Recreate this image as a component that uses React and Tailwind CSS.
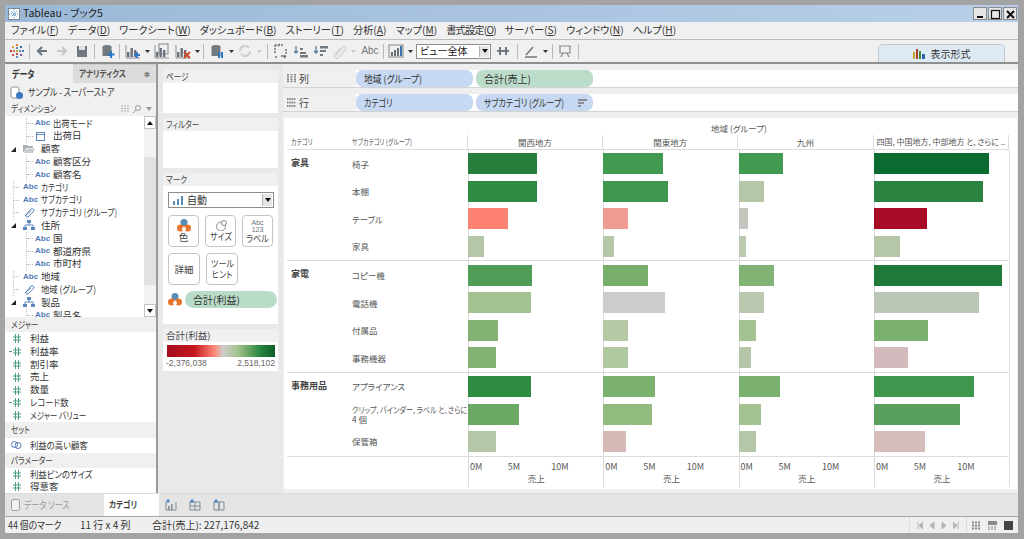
import React from 'react';

const T = ({ children, className = '' }) => {
  const s = String(children);
  const kana = (s.match(/[\u3040-\u30ff]/g) || []).length;
  const han = (s.match(/[\u4e00-\u9fff]/g) || []).length;
  const cls = kana === 0 ? '' : han === 0 ? 'scale-x-[0.8]' : 'scale-x-[0.88]';
  return <span className={`inline-block origin-left whitespace-nowrap ${cls} ${className}`}>{children}</span>;
};

const Svg = ({ w = 16, h = 16, children, className = '' }) => (
  <svg width={w} height={h} viewBox={`0 0 ${w} ${h}`} className={`block shrink-0 ${className}`}>{children}</svg>
);
const Bars = ({ c = '#66717c' }) => (<>
  <rect x="2" y="9" width="2.4" height="5" fill={c} /><rect x="5.5" y="5" width="2.4" height="9" fill={c} /><rect x="9" y="7" width="2.4" height="7" fill={c} />
  <path d="M1 2V15H15" stroke="#8a9097" fill="none" />
</>);
const Logo = () => (
  <Svg>
    {[[8, 2, '#e8803a'], [8, 14, '#5f8fc0'], [2, 8, '#c0392b'], [14, 8, '#4a7fb5'], [4, 4, '#e0a030'], [12, 4, '#3f6fa0'], [4, 12, '#d05050'], [12, 12, '#7a5aa0'], [8, 8, '#d0a040'], [8, 5, '#5a88b8'], [5, 8, '#e07050'], [11, 8, '#5a88b8'], [8, 11, '#c05040']].map(([x, y, c], i) => (
      <rect key={i} x={x - 1} y={y - 1} width="2" height="2" fill={c} />
    ))}
  </Svg>
);
const Caret = ({ c = '#333' }) => (
  <span className="w-[8px] flex justify-center shrink-0"><svg width="5" height="3"><path d="M0 0H5L2.5 3Z" fill={c} /></svg></span>
);
const Sep = ({ cls = 'mx-[5px]' }) => <span className={`w-px h-[15px] bg-[#b8b8b8] shrink-0 ${cls}`} />;
const Slot = ({ w = 'w-[20px]', children }) => <span className={`${w} h-[20px] flex items-center justify-center shrink-0`}>{children}</span>;

const Toolbar = () => (
  <div className="h-[24px] flex items-center pl-[3px] bg-[#f0f0f0] border-b-2 border-[#8f8f8f] relative">
    <Slot w="w-[18px]"><Logo /></Slot>
    <Sep cls="ml-[3px] mr-[2px]" />
    <Slot><Svg><path d="M13 8H4M8 4L4 8L8 12" stroke="#6b7680" strokeWidth="2.2" fill="none" /></Svg></Slot>
    <Slot><Svg><path d="M3 8H12M8 4L12 8L8 12" stroke="#c8c8c8" strokeWidth="2.2" fill="none" /></Svg></Slot>
    <Slot><Svg><path d="M3 3H13V14H3Z" fill="#70777e" /><rect x="5" y="3" width="6" height="4" fill="#dfe1e3" /></Svg></Slot>
    <Sep cls="mx-[2px]" />
    <Slot w="w-[22px]"><Svg><ellipse cx="7" cy="4" rx="4.5" ry="2" fill="#737a80" /><rect x="2.500" y="4" width="9" height="9" fill="#737a80" /><path d="M11 8V15M7.500 11.500H14.500" stroke="#2a78c0" strokeWidth="2" /></Svg></Slot>
    <Sep cls="mr-[3px]" />
    <Slot><Svg><Bars /><path d="M12 9V15M9 12H15" stroke="#2a78c0" strokeWidth="1.800" /></Svg></Slot>
    <Caret />
    <Slot w="w-[22px]"><Svg><Bars /><rect x="5" y="1" width="9" height="10" fill="none" stroke="#80868c" /></Svg></Slot>
    <Slot w="w-[20px]"><Svg><Bars /><path d="M9 9L15 15M15 9L9 15" stroke="#d04a28" strokeWidth="1.800" /></Svg></Slot>
    <Caret />
    <Sep cls="ml-[2px] mr-[3px]" />
    <Slot><Svg><ellipse cx="7" cy="4" rx="4.500" ry="2" fill="#737a80" /><rect x="2.500" y="4" width="9" height="9" fill="#737a80" /><rect x="9" y="9" width="2" height="6" fill="#2a78c0" /><rect x="12" y="9" width="2" height="6" fill="#2a78c0" /></Svg></Slot>
    <Caret />
    <Slot w="w-[20px]"><Svg><path d="M3 8A5 5 0 0 1 12 5M13 8A5 5 0 0 1 4 11" stroke="#cfcfcf" strokeWidth="2" fill="none" /></Svg></Slot>
    <Caret c="#c8c8c8" />
    <Sep cls="ml-[4px] mr-[3px]" />
    <Slot><Svg><path d="M2 2H10M2 2V11M2 14H5M13 6V11" stroke="#6b7680" strokeWidth="1.500" strokeDasharray="2 1" fill="none" /><path d="M8 13H13M13 13L11 15M5 3L7 1" stroke="#6b7680" strokeWidth="1.500" fill="none" /></Svg></Slot>
    <Slot><Svg><path d="M3 3V10M1 8L3 10L5 8" stroke="#5b7f9d" strokeWidth="1.300" fill="none" /><rect x="7" y="5" width="3" height="2" fill="#737a80" /><rect x="7" y="9" width="6" height="2" fill="#737a80" /><rect x="7" y="12" width="8" height="2.500" fill="#737a80" /></Svg></Slot>
    <Slot><Svg><path d="M3 3V10M1 8L3 10L5 8" stroke="#5b7f9d" strokeWidth="1.300" fill="none" /><rect x="7" y="3" width="8" height="2.500" fill="#737a80" /><rect x="7" y="7" width="6" height="2" fill="#737a80" /><rect x="7" y="11" width="3" height="2" fill="#737a80" /></Svg></Slot>
    <Slot w="w-[18px]"><Svg><path d="M4 12L11 4A2 2 0 0 1 14 6L7 14A2 2 0 0 1 3 11L9 5" stroke="#d4d4d4" strokeWidth="1.300" fill="none" /></Svg></Slot>
    <Caret c="#c8c8c8" />
    <span className="w-[26px] text-[10px] leading-none text-[#777] text-center shrink-0 font-['Liberation_Sans',sans-serif]">Abc</span>
    <Sep cls="mr-[2px]" />
    <Slot w="w-[20px]"><Svg><rect x="1" y="2" width="14" height="12" fill="none" stroke="#80868c" /><rect x="3" y="9" width="2" height="4" fill="#66717c" /><rect x="6" y="7" width="2" height="6" fill="#66717c" /><rect x="9" y="5" width="2" height="8" fill="#66717c" /><rect x="12" y="3" width="2" height="10" fill="#3b73b0" /></Svg></Slot>
    <Caret />
    <div className="w-[75px] h-[15px] ml-[2px] bg-white border border-[#8c8c8c] flex items-center pl-[3px] text-[10px] leading-none text-[#222] relative shrink-0">
      ビュー全体
      <span className="absolute right-px top-px bottom-px w-[10px] bg-[#e4e4e4] border-l border-[#b0b0b0] flex items-center justify-center"><svg width="6" height="4"><path d="M0 0H6L3 4Z" fill="#111" /></svg></span>
    </div>
    <Slot w="w-[23px]"><Svg><path d="M2 8H14M5 4V12M11 4V12" stroke="#70777e" strokeWidth="2" /></Svg></Slot>
    <Sep cls="mx-[3px]" />
    <Slot><Svg><path d="M3 12L10 4M2 14H14" stroke="#777" strokeWidth="1.600" /></Svg></Slot>
    <Caret />
    <Sep cls="ml-[3px] mr-[2px]" />
    <Slot><Svg><path d="M2 3H14M3 3V10H13V3M6 10L4 14M10 10L12 14" stroke="#8a8a8a" strokeWidth="1.200" fill="none" /></Svg></Slot>
    <Sep cls="ml-[3px]" />
    <div className="ml-auto mr-[13px] self-end w-[127px] h-[18px] rounded-t-[5px] border border-b-0 border-[#c2c8ce] bg-[#dde9f3] flex items-center justify-center gap-[5px] text-[10px] leading-none text-[#333]">
      <svg width="13" height="11" className="shrink-0"><rect x="0" y="4" width="2" height="7" fill="#c9a12b" /><rect x="3" y="1" width="2" height="10" fill="#b03a2e" /><rect x="6" y="3" width="2" height="8" fill="#3e8a3e" /><rect x="9" y="6" width="3" height="5" fill="#2f5fa8" /></svg>
      表示形式
    </div>
  </div>
);

const menu = [
  ['ファイル', 'F', ''], ['データ', 'D', ''], ['ワークシート', 'W', ''], ['ダッシュボード', 'B', ''], ['ストーリー', 'T', ''], ['分析', 'A', ''], ['マップ', 'M', ''], ['書式設定', 'O', 'tracking-[-0.8px]'], ['サーバー', 'S', ''], ['ウィンドウ', 'N', ''], ['ヘルプ', 'H', ''],
];

const Abc = () => <span className="w-[13px] shrink-0 text-[8px] leading-none font-bold text-[#4f78b5] font-['Liberation_Sans',sans-serif]">Abc</span>;
const Clip = () => <Svg w={13} h={11} className="shrink-0"><path d="M2 9L8 2A2 2 0 0 1 11 4L5 10A1.500 1.500 0 0 1 3 8L8 4" stroke="#5c86bd" fill="none" /></Svg>;
const Hier = () => <Svg w={13} h={11} className="shrink-0"><rect x="4" y="0" width="4" height="3" fill="#5c86bd" /><rect x="0" y="7" width="4" height="3" fill="#5c86bd" /><rect x="8" y="7" width="4" height="3" fill="#5c86bd" /><path d="M6 3V5M2 7V5H10V7" stroke="#5c86bd" fill="none" /></Svg>;
const Folder = () => <Svg w={13} h={11} className="shrink-0"><path d="M0 9V2H4L5 3H10V5H3L1 9Z" fill="#aab0b6" /><path d="M1 10L3 5.500H12L10 10Z" fill="#c8ccd0" /></Svg>;
const Cal = () => <Svg w={13} h={11} className="shrink-0"><rect x="1.500" y="1.500" width="8" height="8" fill="none" stroke="#5c86bd" /><path d="M1 3.500H10" stroke="#5c86bd" /></Svg>;
const Tri = () => <svg width="5" height="5" className="absolute left-[6px] top-[4px]"><path d="M5 0V5H0Z" fill="#222" /></svg>;

const tree = [
  [1, 'abc', '出荷モード'], [1, 'cal', '出荷日'], [0, 'folder', '顧客', true], [1, 'abc', '顧客区分'], [1, 'abc', '顧客名'],
  [0, 'abc', 'カテゴリ'], [0, 'abc', 'サブカテゴリ'], [0, 'clip', 'サブカテゴリ (グループ)'], [0, 'hier', '住所', true], [1, 'abc', '国'], [1, 'abc', '都道府県'], [1, 'abc', '市町村'],
  [0, 'abc', '地域'], [0, 'clip', '地域 (グループ)'], [0, 'hier', '製品', true], [1, 'abc', '製品名'],
];
const kind = { abc: <Abc />, cal: <Cal />, folder: <Folder />, clip: <Clip />, hier: <Hier /> };

const TreeRow = ({ d, k, t, exp }) => (
  <div className="h-[12.8px] flex items-center relative text-[9.5px] leading-none text-[#333] whitespace-nowrap">
    {exp && <Tri />}
    {!exp && <span className={`${d ? 'ml-[21px] w-[7px] mr-[2px] border-l h-full' : 'ml-[8px] w-[6px] mr-[4px] border-l h-full'} border-dotted border-[#c4c4c4] flex items-center shrink-0`}><span className="w-full h-0 border-t border-dotted border-[#b4b4b4]" /></span>}
    {exp && <span className="ml-[18px]" />}
    {kind[k]}
    <span className="ml-[5px]"><T>{t}</T></span>
  </div>
);

const Hash = ({ dot }) => (
  <span className="relative w-[8px] h-[9px] ml-[8px] mr-[9px] shrink-0">
    {dot && <span className="absolute left-[-4px] top-[4px] w-[3px] h-px bg-[#4e9e7a]" />}
    <svg width="8" height="9" className="block"><path d="M2.500 0V9M5.500 0V9M0 3H8M0 6H8" stroke="#4e9e7a" /></svg>
  </span>
);
const Measure = ({ t, dot }) => (
  <div className="h-[12.8px] flex items-center text-[9.5px] leading-none text-[#333] whitespace-nowrap"><Hash dot={dot} /><T>{t}</T></div>
);
const SecHead = ({ t }) => (
  <div className="h-[16px] bg-[#f0f0f0] flex items-center pl-[6px] text-[9.5px] leading-none text-[#444] relative"><T>{t}</T></div>
);

const LeftPanel = () => (
  <div className="w-[153px] shrink-0 bg-white border-r-2 border-[#9a9a9a] flex flex-col overflow-hidden">
    <div className="h-[19px] flex shrink-0 bg-[#dcdcdc]">
      <div className="w-[68px] bg-[#f0f0f0] pl-[7px] flex items-center font-bold text-[10px] leading-none text-[#333]"><T>データ</T></div>
      <div className="flex-1 pl-[6px] flex items-center justify-between pr-[6px] text-[9.5px] font-bold leading-none text-[#555] border-t border-[#cfcfcf]"><T>アナリティクス</T><span className="text-[7px] text-[#777]">≑</span></div>
    </div>
    <div className="h-[18px] bg-[#f0f0f0] flex items-center pl-[5px] gap-[5px] text-[10px] leading-none text-[#333] shrink-0">
      <svg width="13" height="13" className="shrink-0"><rect x="1" y="1" width="8" height="11" rx="2" fill="#fff" stroke="#8a9199" /><circle cx="9.500" cy="9.500" r="3.500" fill="#3b78c0" /></svg>
      <T>サンプル - スーパーストア</T>
    </div>
    <div className="h-[15px] bg-[#f0f0f0] flex items-center pl-[6px] pr-[4px] text-[9.5px] leading-none text-[#444] shrink-0 justify-between">
      <T>ディメンション</T>
      <span className="flex items-center gap-[3px]">
        <svg width="9" height="7"><path d="M0 1H9M0 3.500H9M0 6H9" stroke="#b0b0b0" strokeDasharray="2 1" /></svg>
        <svg width="8" height="8"><circle cx="5" cy="3" r="2.500" fill="none" stroke="#999" /><path d="M3 5L0 8" stroke="#999" /></svg>
        <svg width="6" height="4" className="ml-[2px]"><path d="M0 0H6L3 4Z" fill="#999" /></svg>
      </span>
    </div>
    <div className="h-[201px] flex shrink-0">
      <div className="flex-1 overflow-hidden pt-[1px]">
        {tree.map((r, i) => <TreeRow key={i} d={r[0]} k={r[1]} t={r[2]} exp={r[3]} />)}
      </div>
      <div className="w-[12px] bg-[#f2f2f2] flex flex-col shrink-0">
        <div className="h-[13px] bg-white border border-[#c4c4c4] flex items-center justify-center"><svg width="6" height="4"><path d="M0 4H6L3 0Z" fill="#111" /></svg></div>
        <div className="h-[28px]" />
        <div className="h-[128px] bg-[#e2e2e2]" />
        <div className="flex-1" />
        <div className="h-[13px] bg-white border border-[#c4c4c4] flex items-center justify-center"><svg width="6" height="4"><path d="M0 0H6L3 4Z" fill="#111" /></svg></div>
      </div>
    </div>
    <SecHead t="メジャー" />
    <div className="h-[90px] shrink-0">
      <Measure t="利益" /><Measure t="利益率" dot /><Measure t="割引率" /><Measure t="売上" /><Measure t="数量" /><Measure t="レコード数" dot /><Measure t="メジャー バリュー" />
    </div>
    <SecHead t="セット" />
    <div className="h-[15px] flex items-center pl-[6px] text-[9.5px] leading-none text-[#333] whitespace-nowrap shrink-0">
      <svg width="11" height="10" className="mr-[8px] shrink-0"><circle cx="3.500" cy="4.500" r="3" fill="none" stroke="#4f78b5" /><circle cx="7" cy="5.500" r="3" fill="none" stroke="#4f78b5" /></svg>
      <T>利益の高い顧客</T>
    </div>
    <SecHead t="パラメーター" />
    <Measure t="利益ビンのサイズ" /><Measure t="得意客" />
  </div>
);

const CardHead = ({ t }) => <div className="h-[13px] bg-[#f0f0f0] rounded-t-[4px] pl-[3px] flex items-center text-[9.5px] leading-none text-[#444]"><T>{t}</T></div>;
const ColorDots = () => (
  <svg width="14" height="13" className="shrink-0"><circle cx="7" cy="3.500" r="3.500" fill="#5b8bb0" /><circle cx="3.500" cy="9" r="3.500" fill="#e8732a" /><circle cx="10.500" cy="9" r="3.500" fill="#e8732a" /><circle cx="7" cy="10" r="2" fill="#fff" /></svg>
);
const MarkBtn = ({ children }) => (
  <div className="w-[32px] h-[32px] rounded-[4px] bg-white border border-[#c4c4c4] flex flex-col items-center justify-center text-[9.5px] leading-[11px] text-[#444] text-center">{children}</div>
);
const Narrow = ({ children }) => <span className="inline-block scale-x-[0.85] whitespace-nowrap">{children}</span>;

const Cards = () => (
  <div className="w-[125px] shrink-0 bg-[#e9e9e9] flex flex-col gap-[5px] pt-[6px] pl-[5px] pr-[5px]">
    <div className="h-[43px] bg-white shrink-0 rounded-t-[4px]"><CardHead t="ページ" /></div>
    <div className="h-[50px] bg-white shrink-0 rounded-t-[4px]"><CardHead t="フィルター" /></div>
    <div className="h-[151px] bg-white shrink-0 rounded-t-[4px]">
      <CardHead t="マーク" />
      <div className="mx-[5px] mt-[6px] h-[16px] w-[106px] bg-white border border-[#8c8c8c] flex items-center pl-[4px] gap-[4px] text-[10px] leading-none text-[#333] relative">
        <svg width="10" height="9" className="shrink-0"><rect x="0" y="5" width="2" height="4" fill="#5b8bb0" /><rect x="4" y="3" width="2" height="6" fill="#5b8bb0" /><rect x="8" y="0" width="2" height="9" fill="#5b8bb0" /></svg>
        自動
        <span className="absolute right-px top-px bottom-px w-[10px] bg-[#e4e4e4] border-l border-[#b0b0b0] flex items-center justify-center"><svg width="6" height="4"><path d="M0 0H6L3 4Z" fill="#111" /></svg></span>
      </div>
      <div className="flex gap-[6px] mx-[5px] mt-[7px]">
        <MarkBtn><ColorDots />色</MarkBtn>
        <MarkBtn><svg width="12" height="11"><circle cx="6" cy="6.500" r="4.500" fill="none" stroke="#888" /><circle cx="9" cy="3" r="2.500" fill="#fff" stroke="#888" /></svg><Narrow>サイズ</Narrow></MarkBtn>
        <MarkBtn><span className="text-[7px] leading-[7px] text-[#66717c] font-['Liberation_Sans',sans-serif]">Abc<br />123</span><Narrow>ラベル</Narrow></MarkBtn>
      </div>
      <div className="flex gap-[6px] mx-[5px] mt-[6px]">
        <MarkBtn>詳細</MarkBtn>
        <MarkBtn><Narrow>ツール</Narrow><Narrow>ヒント</Narrow></MarkBtn>
      </div>
      <div className="flex items-center gap-[3px] ml-[5px] mt-[6px]">
        <ColorDots />
        <div className="w-[92px] h-[17px] rounded-full bg-[#b9dcc8] pl-[8px] flex items-center text-[10px] leading-none text-[#333]">合計(利益)</div>
      </div>
    </div>
    <div className="h-[42px] bg-white shrink-0 rounded-t-[4px]">
      <CardHead t="合計(利益)" />
      <div className="mx-[4px] mt-[3px] h-[12px] w-[108px] bg-[linear-gradient(90deg,#a50f1f_0%,#c4161c_25%,#ff8878_44%,#cccccc_52%,#a6c48e_65%,#2e8b42_85%,#0b5c2a_100%)]" />
      <div className="mx-[3px] flex justify-between text-[8.5px] leading-[10px] mt-[1px] text-[#666] font-['Liberation_Sans',sans-serif]"><span>-2,376,038</span><span>2,518,102</span></div>
    </div>
  </div>
);

const Pill = ({ bg, children }) => (
  <div className={`w-[117px] h-[17px] ${bg} rounded-[7px] shrink-0 flex items-center pl-[8px] text-[10px] leading-none text-[#333] relative`}>{children}</div>
);
const Shelf = ({ icon, t, children }) => (
  <div className="h-[18px] bg-white flex shrink-0 border-b border-[#d2d2d2]">
    <div className="w-[73px] bg-[#f0f0f0] flex items-center pl-[4px] gap-[3px] text-[10px] leading-none text-[#444] shrink-0">{icon}{t}</div>
    <div className="flex gap-[3px]">{children}</div>
  </div>
);

const groups = [
  ['家具', [
    ['椅子', [[69, 'bg-[#287f3d]'], [60, 'bg-[#419a50]'], [44, 'bg-[#439a51]'], [115, 'bg-[#0b6a30]']]],
    ['本棚', [[69, 'bg-[#2e8b42]'], [65, 'bg-[#3f964e]'], [25, 'bg-[#b5c7a8]'], [109, 'bg-[#2a8340]']]],
    ['テーブル', [[40, 'bg-[#fe8272]'], [25, 'bg-[#ee9c92]'], [9, 'bg-[#c5c5c0]'], [53, 'bg-[#a90a26]']]],
    ['家具', [[16, 'bg-[#b5c7a8]'], [11, 'bg-[#b5c7a8]'], [7, 'bg-[#bbc9b0]'], [26, 'bg-[#b5c7a8]']]],
  ]],
  ['家電', [
    ['コピー機', [[64, 'bg-[#4f9d57]'], [45, 'bg-[#78ae6c]'], [35, 'bg-[#80b374]'], [128, 'bg-[#1f7a3a]']]],
    ['電話機', [[63, 'bg-[#a4c290]'], [62, 'bg-[#cccccc]'], [25, 'bg-[#bac8b0]'], [105, 'bg-[#bcc7b5]']]],
    ['付属品', [[30, 'bg-[#83b274]'], [25, 'bg-[#b5c9a5]'], [17, 'bg-[#a4c290]'], [54, 'bg-[#7ab16f]']]],
    ['事務機器', [[28, 'bg-[#83b274]'], [25, 'bg-[#b0c9a0]'], [12, 'bg-[#b5c7a8]'], [34, 'bg-[#d4b9bd]']]],
  ]],
  ['事務用品', [
    ['アプライアンス', [[63, 'bg-[#2e8b42]'], [52, 'bg-[#7ab16f]'], [41, 'bg-[#7ab16f]'], [100, 'bg-[#3f964e]']]],
    [['クリップ, バインダー, ラベル と、さらに', '4 個'], [[51, 'bg-[#6aa864]'], [49, 'bg-[#92bb80]'], [22, 'bg-[#a4c290]'], [86, 'bg-[#58a05c]']]],
    ['保管箱', [[28, 'bg-[#b5c7a8]'], [23, 'bg-[#d4b9b6]'], [17, 'bg-[#b5c7a8]'], [51, 'bg-[#d4bdbb]']]],
  ]],
];
const Pane = ({ children, className = '' }) => <div className={`w-[135.3px] shrink-0 border-l border-[#dcdcdc] ${className}`}>{children}</div>;

const Chart = () => (
  <div className="mt-[6px] bg-white h-[371px] mx-[1px] text-[#555] flex flex-col">
    <div className="h-[17px] pl-[184px] w-[726px] text-center text-[8.5px] leading-[20px] shrink-0">地域 (グループ)</div>
    <div className="flex h-[15px] ml-[3px] w-[722px] border-b border-[#dcdcdc] text-[8.5px] leading-[14px] shrink-0">
      <div className="w-[64px] pl-[4px] text-[7.500px]"><T>カテゴリ</T></div>
      <div className="w-[117px] pl-[1px] text-[7.500px]"><T>サブカテゴリ (グループ)</T></div>
      {['関西地方', '関東地方', '九州', '四国, 中国地方, 中部地方 と, さらに ..'].map((t, i) => (
        <Pane key={t} className={`text-center whitespace-nowrap overflow-hidden ${i === 3 ? 'text-[8px]' : ''}`}>{t}</Pane>
      ))}
      <span className="w-0 border-l border-[#dcdcdc]" />
    </div>
    {groups.map(([g, rows]) => (
      <div key={g} className="flex ml-[3px] w-[722px] border-b border-[#dcdcdc] shrink-0">
        <div className="w-[64px] pl-[4px] pt-[8px] font-bold text-[9px] leading-none text-[#444] shrink-0">{g}</div>
        <div className="flex-1">
          {rows.map(([s, v], ri) => (
            <div key={ri} className="flex h-[27.6px]">
              <div className="w-[117px] pl-[1px] flex flex-col justify-center text-[8.5px] leading-[10.5px] shrink-0 whitespace-nowrap">
                {Array.isArray(s) ? <>
                  <span className="block origin-left scale-x-[0.84]">{s[0]}</span>
                  <span>{s[1]}</span>
                </> : s}
              </div>
              {v.map(([w, c], i) => (
                <Pane key={i} className="flex items-center"><div className={`h-[21px] -ml-px ${c}`} style={{ width: w }} /></Pane>
              ))}
              <span className="w-0 border-l border-[#dcdcdc]" />
            </div>
          ))}
        </div>
      </div>
    ))}
    <div className="flex ml-[3px] w-[722px] flex-1 pb-[2px]">
      <div className="w-[181px] shrink-0" />
      {[0, 1, 2, 3].map((i) => (
        <Pane key={i} className="text-[9px] leading-none">
          <div className="flex pt-[5px] h-[15px]">
            <span className="w-[33px] pl-[1px]">0M</span>
            <span className="w-[24px] text-center">5M</span>
            <span className="w-[24px] ml-[22px] text-center">10M</span>
          </div>
          <div className="text-center pt-[2px] text-[8.5px]">売上</div>
        </Pane>
      ))}
      <span className="w-0 border-l border-[#dcdcdc]" />
    </div>
  </div>
);

const Main = () => (
  <div className="flex-1 bg-[#eeeeee] flex flex-col pt-[6px] gap-[6px] min-w-0">
    <Shelf t="列" icon={<svg width="9" height="9"><path d="M1 0V9M4.500 0V9M8 0V9" stroke="#888" strokeWidth="2" strokeDasharray="1.500 0.700" /></svg>}>
      <Pill bg="bg-[#c7d9f2]"><T>地域 (グループ)</T></Pill>
      <Pill bg="bg-[#bbdcc9]">合計(売上)</Pill>
    </Shelf>
    <div>
      <Shelf t="行" icon={<svg width="9" height="9"><path d="M0 1H9M0 4.500H9M0 8H9" stroke="#888" strokeWidth="2" strokeDasharray="1.500 0.700" /></svg>}>
        <Pill bg="bg-[#c7d9f2]"><T>カテゴリ</T></Pill>
        <Pill bg="bg-[#c7d9f2]">
          <T>サブカテゴリ (グループ)</T>
          <svg width="9" height="8" className="absolute right-[6px] top-[5px]"><path d="M0 1H9M0 4H6M0 7H3" stroke="#777" strokeWidth="1.500" /></svg>
        </Pill>
      </Shelf>
      <Chart />
    </div>
  </div>
);

const BottomTabs = () => (
  <div className="h-[23px] bg-[#e4e4e4] border-t border-[#dcdcdc] flex items-stretch shrink-0 text-[10px] leading-none">
    <div className="w-[99px] flex items-center pl-[6px] gap-[4px] text-[#999]">
      <svg width="9" height="12" className="shrink-0"><rect x="0.500" y="0.500" width="8" height="11" rx="2" fill="#f2f2f2" stroke="#999" /></svg>
      <T>データ ソース</T>
    </div>
    <div className="w-[55px] bg-white flex items-center pl-[5px] font-bold text-[#444] text-[9.5px]"><T>カテゴリ</T></div>
    <div className="flex items-center pl-[6px] gap-[12px]">
      <Svg w={12} h={12}><path d="M1 3V11H11V3" stroke="#7d8a96" fill="none" /><rect x="3" y="7" width="1.500" height="4" fill="#7d8a96" /><rect x="6" y="5" width="1.500" height="6" fill="#7d8a96" /><path d="M3 0V4M1 2H5" stroke="#2a78c0" /></Svg>
      <Svg w={12} h={12}><path d="M1 3H11V11H1ZM1 7H11M6 3V11" stroke="#7d8a96" fill="none" /><path d="M3 0V4M1 2H5" stroke="#2a78c0" /></Svg>
      <Svg w={12} h={12}><path d="M1 3H6V11H1ZM6 3H11V11H6Z" stroke="#7d8a96" fill="none" /><path d="M3 0V4M1 2H5" stroke="#2a78c0" /></Svg>
    </div>
  </div>
);

const StatusBar = () => (
  <div className="h-[17px] bg-[#efefef] border-t border-[#a8a8a8] flex items-center pl-[3px] text-[10px] leading-none text-[#333] shrink-0 relative whitespace-nowrap">
    <span className="w-[72px]"><T>44 個のマーク</T></span>
    <span className="w-[72px]">11 行 x 4 列</span>
    <span>合計(売上): 227,176,842</span>
    <div className="ml-auto flex items-center h-full">
      <div className="flex items-center gap-[4px] border-l border-[#dcdcdc] h-full px-[6px]">
        {['M2 1V8M7 1L3 4.500L7 8', 'M6 1L2 4.500L6 8Z', 'M2 1L6 4.500L2 8Z', 'M6 1V8M1 1L5 4.500L1 8'].map((d) => (
          <svg key={d} width="8" height="9"><path d={d} fill="#b4b4b4" stroke="#b4b4b4" /></svg>
        ))}
      </div>
      <div className="flex items-center gap-[7px] border-l border-[#dcdcdc] h-full pl-[5px] pr-[5px]">
        <svg width="9" height="9"><path d="M0 1.500H9M0 4.500H9M0 7.500H9" stroke="#8a8a8a" strokeWidth="2" strokeDasharray="2 1" /></svg>
        <svg width="9" height="9"><rect width="9" height="4" fill="#8a8a8a" /><path d="M0 6H9M0 8H9" stroke="#8a8a8a" strokeDasharray="2 1" /></svg>
        <span className="w-[9px] h-[9px] bg-[#444]" />
      </div>
    </div>
  </div>
);

export default function App() {
  return (
    <div className="w-[1024px] h-[539px] bg-[#a3a3a3] pl-[5px] pr-[6px] pt-[5px] pb-[6px] flex flex-col overflow-hidden font-['Noto_Sans_CJK_JP','Noto_Sans',sans-serif] [font-feature-settings:'palt']">
      <div className="h-[17px] shrink-0 bg-[linear-gradient(90deg,#9cb8d8,#b8d0e8)] flex items-center pl-[3px] gap-[3px] text-[10.5px] leading-none text-[#222] relative">
        <span className="w-[12px] h-[12px] bg-white border border-[#7a8a9a] flex items-center justify-center shrink-0"><svg width="10" height="10"><path d="M5 0V10M0 5H10M2 2L8 8M8 2L2 8" stroke="#4a8ac0" strokeDasharray="1 1" /></svg></span>
        <span>Tableau - ブック5</span>
        <div className="ml-auto mr-[1px] flex gap-px">
          {[
            <path key="a" d="M3 9H9" stroke="#111" strokeWidth="2" />,
            <rect key="b" x="2.500" y="2.500" width="8" height="8" fill="none" stroke="#111" strokeWidth="1.200" />,
            <path key="c" d="M3 3L10 10M10 3L3 10" stroke="#111" strokeWidth="2" />,
          ].map((p, i) => (
            <span key={i} className="w-[14px] h-[13px] bg-[#e6e6e6] border border-[#8a8a8a]"><svg width="13" height="12">{p}</svg></span>
          ))}
        </div>
      </div>
      <div className="h-[18px] shrink-0 bg-[#f0f0f0] border-b border-[#bcbcbc] flex items-center pl-[6px] gap-[9px] text-[10.2px] leading-none text-[#333] whitespace-nowrap">
        {menu.map(([a, b, c]) => <span key={b} className={c}>{a}(<u>{b}</u>)</span>)}
      </div>
      <Toolbar />
      <div className="flex flex-1 min-h-0">
        <LeftPanel />
        <Cards />
        <Main />
      </div>
      <BottomTabs />
      <StatusBar />
    </div>
  );
}
